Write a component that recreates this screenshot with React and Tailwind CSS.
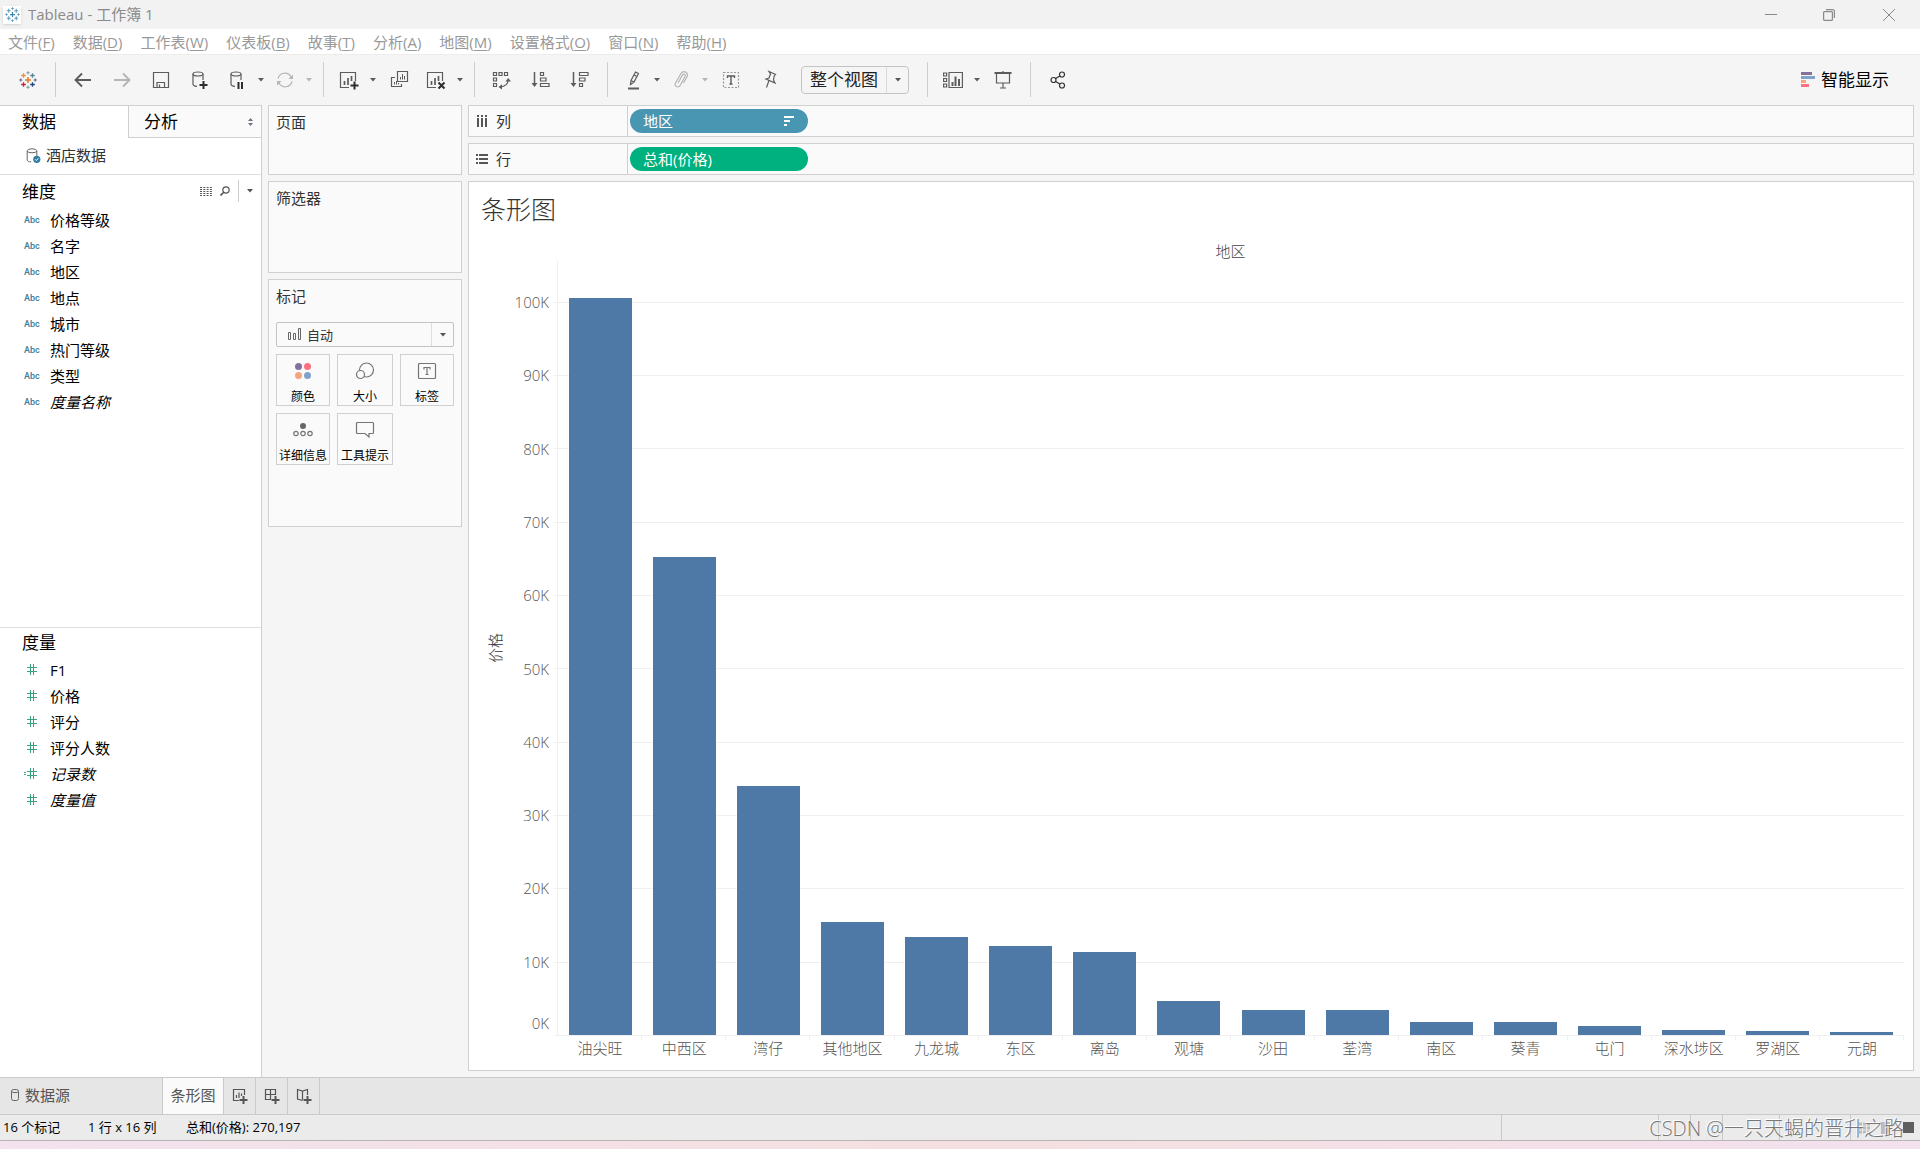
import React, { useState } from "react";
import clsx from "clsx";

const menus = [
  ["文件", "F"],
  ["数据", "D"],
  ["工作表", "W"],
  ["仪表板", "B"],
  ["故事", "T"],
  ["分析", "A"],
  ["地图", "M"],
  ["设置格式", "O"],
  ["窗口", "N"],
  ["帮助", "H"],
];

const dimensions = [
  { name: "价格等级" },
  { name: "名字" },
  { name: "地区" },
  { name: "地点" },
  { name: "城市" },
  { name: "热门等级" },
  { name: "类型" },
  { name: "度量名称", generated: true },
];

const measures = [
  { name: "F1" },
  { name: "价格" },
  { name: "评分" },
  { name: "评分人数" },
  { name: "记录数", generated: true, calculated: true },
  { name: "度量值", generated: true },
];

// price totals per district
const AXIS_MAX = 105600;
const districts = [
  { name: "油尖旺", value: 100600 },
  { name: "中西区", value: 65250 },
  { name: "湾仔", value: 34000 },
  { name: "其他地区", value: 15450 },
  { name: "九龙城", value: 13400 },
  { name: "东区", value: 12150 },
  { name: "离岛", value: 11350 },
  { name: "观塘", value: 4650 },
  { name: "沙田", value: 3420 },
  { name: "荃湾", value: 3410 },
  { name: "南区", value: 1800 },
  { name: "葵青", value: 1780 },
  { name: "屯门", value: 1240 },
  { name: "深水埗区", value: 700 },
  { name: "罗湖区", value: 560 },
  { name: "元朗", value: 420 },
];
const ticks = [100, 90, 80, 70, 60, 50, 40, 30, 20, 10];

const Icon = ({ size = 20, children, className }) => (
  <svg
    width={size}
    height={size}
    viewBox={`0 0 ${size} ${size}`}
    fill="none"
    stroke="currentColor"
    strokeWidth="1.2"
    className={className}
    aria-hidden="true"
  >
    {children}
  </svg>
);

const Caret = ({ className }) => (
  <svg
    width="6"
    height="4"
    viewBox="0 0 6 4"
    className={className}
    aria-hidden="true"
  >
    <path d="M0 0h6L3 3.5z" fill="currentColor" />
  </svg>
);

const plusPath = (x, y, r) => `M${x - r} ${y}h${r * 2}M${x} ${y - r}v${r * 2}`;

const TableauLogo = ({ size, colors }) => (
  <svg width={size} height={size} viewBox="0 0 18 18" fill="none" aria-hidden="true">
    <path d={plusPath(9, 9, 3)} stroke={colors[0]} strokeWidth="1.5" />
    <path d={plusPath(4.5, 4.5, 2.3)} stroke={colors[1]} strokeWidth="1.3" />
    <path d={plusPath(13.5, 4.5, 2.3)} stroke={colors[2]} strokeWidth="1.3" />
    <path d={plusPath(4.5, 13.5, 2.3)} stroke={colors[3]} strokeWidth="1.3" />
    <path d={plusPath(13.5, 13.5, 2.3)} stroke={colors[4]} strokeWidth="1.3" />
    <path d={plusPath(9, 1.8, 1.6)} stroke={colors[5]} />
    <path d={plusPath(9, 16.2, 1.6)} stroke={colors[5]} />
    <path d={plusPath(1.8, 9, 1.6)} stroke={colors[6]} />
    <path d={plusPath(16.2, 9, 1.6)} stroke={colors[6]} />
  </svg>
);

const ToolButton = ({ label, caret, disabled, children }) => (
  <div
    className={clsx("flex items-center", disabled ? "text-[#b5b5b5]" : "text-[#5c5c5c]")}
  >
    <button
      type="button"
      aria-label={label}
      disabled={disabled}
      className={clsx("flex h-9 items-center justify-center", caret ? "w-9" : "w-[39px]")}
    >
      {children}
    </button>
    {caret && (
      <button
        type="button"
        aria-label={`${label}选项`}
        disabled={disabled}
        className="flex h-9 w-3 items-center justify-center"
      >
        <Caret />
      </button>
    )}
  </div>
);

const Divider = () => <div className="mr-[7px] ml-2 h-[35px] w-px bg-[#cfcfcf]" />;

const TitleBar = () => (
  <header className="flex h-[29px] items-center bg-[#f2f2f2] pl-[3px] text-[#8a8a8a]">
    <div className="flex h-[18px] w-[18px] items-center justify-center bg-white shadow">
      <TableauLogo
        size={15}
        colors={["#3b86b0", "#5a9bbf", "#5a9bbf", "#5a9bbf", "#5a9bbf", "#5a9bbf", "#5a9bbf"]}
      />
    </div>
    <h1 className="ml-[7px] flex-1 pb-0.5 text-[15px] leading-5">Tableau - 工作簿 1</h1>
    <div className="flex">
      <button type="button" aria-label="最小化" className="flex w-[58px] justify-center">
        <Icon size={12}>
          <path d="M0 5.5h12" strokeWidth="1" />
        </Icon>
      </button>
      <button type="button" aria-label="还原" className="flex w-[58px] justify-center">
        <Icon size={12}>
          <rect x="0.6" y="2.6" width="8.8" height="8.8" rx="1" />
          <path d="M3 .6h6.4a2 2 0 0 1 2 2V9" />
        </Icon>
      </button>
      <button type="button" aria-label="关闭" className="flex w-[62px] justify-center">
        <Icon size={12}>
          <path d="M0 0l12 12M12 0L0 12" strokeWidth="1" />
        </Icon>
      </button>
    </div>
  </header>
);

const MenuBar = () => (
  <nav className="flex h-[25px] items-center gap-[18px] bg-white pl-2 text-[15px] leading-5 text-[#999]">
    {menus.map(([name, key]) => (
      <button type="button" key={key} className="whitespace-nowrap">
        {name}(<u className="underline-offset-2">{key}</u>)
      </button>
    ))}
  </nav>
);

const Toolbar = () => {
  const [fit, setFit] = useState("整个视图");

  return (
    <div className="flex h-[51px] items-center border-t border-[#ececec] pr-[31px] pb-px pl-2">
      <ToolButton label="起始页">
        <TableauLogo
          size={18}
          colors={["#e8762c", "#e8912d", "#5b879b", "#c72035", "#1f447e", "#7099a6", "#5b6591"]}
        />
      </ToolButton>
      <Divider />
      <ToolButton label="撤消">
        <Icon>
          <path d="M18 10H3M9 3.5L2.5 10 9 16.5" strokeWidth="1.9" />
        </Icon>
      </ToolButton>
      <ToolButton label="重做" disabled>
        <Icon>
          <path d="M2 10h15M11 3.5L17.5 10 11 16.5" strokeWidth="1.9" />
        </Icon>
      </ToolButton>
      <ToolButton label="保存">
        <Icon>
          <path d="M2.5 2.5h15v15h-15z" />
          <path d="M6 17.5v-5h7.5v5M8.5 17v-2.5" />
        </Icon>
      </ToolButton>
      <ToolButton label="新建数据源">
        <Icon>
          <ellipse cx="8" cy="4" rx="5" ry="2" />
          <path d="M3 4v10c0 1.4 1.5 2.2 4 2.3M13 4v6" />
          <path d="M9.5 15h8M13.5 11v8" stroke="#2d2d2d" strokeWidth="2" />
        </Icon>
      </ToolButton>
      <ToolButton label="暂停自动更新" caret>
        <Icon>
          <ellipse cx="9" cy="4" rx="5" ry="2" />
          <path d="M4 4v10c0 1.4 1.5 2.2 4 2.3M14 4v6" />
          <path d="M11.5 12v7M15 12v7" stroke="#2d2d2d" strokeWidth="2" />
        </Icon>
      </ToolButton>
      <ToolButton label="运行更新" caret disabled>
        <Icon>
          <path d="M3 8.5A7 7 0 0 1 16 7M17 11.5A7 7 0 0 1 4 13" />
          <path d="M18 4.5V9h-4.5zM2 15.5V11h4.5z" fill="currentColor" stroke="none" />
        </Icon>
      </ToolButton>
      <Divider />
      <ToolButton label="新建工作表" caret>
        <Icon>
          <path d="M10 17.5H1.5v-15h15V11" />
          <path d="M5.5 11v4M9 8v7M12.5 6v5" strokeWidth="1.7" />
          <path d="M11.5 15.5h8M15.5 11.5v8" stroke="#2d2d2d" strokeWidth="2" />
        </Icon>
      </ToolButton>
      <ToolButton label="复制工作表">
        <Icon>
          <path d="M8.5 1.5h10v10h-10zM6 7.5H2.5v9h10V14" />
          <path
            d="M11.5 7v2.5M13.5 4v5.5M15.5 6v3.5M5.5 12v2.5M7.5 11v3.5M9.5 13v1.5"
            strokeWidth="1"
          />
        </Icon>
      </ToolButton>
      <ToolButton label="清除工作表" caret>
        <Icon>
          <path d="M10 17.5H1.5v-15h15V11" />
          <path d="M5.5 11v4M9 8v7M12.5 6v5" strokeWidth="1.7" />
          <path d="M12.5 12.5l6 6M18.5 12.5l-6 6" stroke="#2d2d2d" strokeWidth="2" />
        </Icon>
      </ToolButton>
      <Divider />
      <ToolButton label="交换行和列">
        <Icon>
          <path d="M1.5 2.5h3v3h-3zM7 2.5h3v3H7zM12.5 2.5h3v3h-3zM1.5 8h3v3h-3zM1.5 13.5h3v3h-3z" />
          <path d="M16 10c0 4-3 6.5-8 7" />
          <path
            d="M13.5 11.5L16.2 8l2.8 3.5zM10 14.3L6.5 17l3.500 2.500z"
            fill="currentColor"
            stroke="none"
          />
        </Icon>
      </ToolButton>
      <ToolButton label="升序排序">
        <Icon>
          <path d="M3.5 2v13" strokeWidth="1.5" />
          <path d="M.5 13h6l-3 4z" fill="currentColor" stroke="none" />
          <path d="M9.500 2.500h3v3h-3zM9.500 8h5.500v3H9.500zM9.500 13.500h8.500v3H9.500z" />
        </Icon>
      </ToolButton>
      <ToolButton label="降序排序">
        <Icon>
          <path d="M3.5 2v13" strokeWidth="1.5" />
          <path d="M.5 13h6l-3 4z" fill="currentColor" stroke="none" />
          <path d="M9.500 2.500h8.500v3H9.500zM9.500 8h5.500v3H9.500zM9.500 13.500h3v3h-3z" />
        </Icon>
      </ToolButton>
      <Divider />
      <ToolButton label="突出显示" caret>
        <Icon>
          <path d="M7.500 14.500l.5-4L12.500 2l3 1.500-4.500 8.500zM8 10.500l3 1.500M11 5l3 1.500" />
          <path d="M5 18.500h11" strokeWidth="2" />
        </Icon>
      </ToolButton>
      <ToolButton label="组成员" caret disabled>
        <Icon>
          <path d="M7 13l4.500-8a1.500 1.500 0 0 1 2.600 1.500l-5 9A2.600 2.600 0 0 1 4.500 13l5.500-9.500a3.400 3.400 0 0 1 6 3.300L12.500 13" />
        </Icon>
      </ToolButton>
      <ToolButton label="显示标记标签">
        <Icon>
          <path d="M2.500 2.500h15v15h-15z" strokeDasharray="2 1.500" stroke="#999" />
          <path d="M6.500 8V6h7v2M10 6v8M8.500 14h3" strokeWidth="1.400" />
        </Icon>
      </ToolButton>
      <ToolButton label="固定轴">
        <Icon>
          <path d="M9 1.500l6.500 3-1.200 1.200-.8 4.300 1.500 3-9-4 3-1 1.500-4zM8.800 11L6.500 17.500" />
        </Icon>
      </ToolButton>
      <div className="relative mr-[10px] ml-3">
        <select
          aria-label="适合"
          value={fit}
          onChange={(e) => setFit(e.target.value)}
          className="h-7 w-[108px] appearance-none rounded-sm border border-[#c4c4c4] bg-[#f5f5f5] pl-2 text-[17px] leading-6 text-[#222]"
        >
          <option>标准</option>
          <option>适合宽度</option>
          <option>适合高度</option>
          <option>整个视图</option>
        </select>
        <span className="pointer-events-none absolute inset-y-px right-px flex w-[22px] items-center justify-center border-l border-[#d9d9d9] text-[#555]">
          <Caret />
        </span>
      </div>
      <Divider />
      <ToolButton label="显示/隐藏卡" caret>
        <Icon>
          <path d="M.6 3h3v3h-3zM.6 8.500h3v3h-3zM.6 14h3v3h-3zM6 2.500h13.400v15H6z" />
          <path d="M9.500 12v4M12.500 6.500V16M16 9v7" strokeWidth="2" />
        </Icon>
      </ToolButton>
      <ToolButton label="演示模式">
        <Icon>
          <path d="M1.500 3h17" strokeWidth="2" />
          <path d="M3.500 3.500v9.500h13V3.500M10 13v5M7 18h6M10 1v2" />
        </Icon>
      </ToolButton>
      <Divider />
      <ToolButton label="共享">
        <Icon className="text-[#333]">
          <circle cx="5.5" cy="10" r="2.500" />
          <circle cx="14" cy="4.500" r="2.500" />
          <circle cx="14" cy="15.500" r="2.500" />
          <path d="M7.600 8.600l4.300-2.700M7.600 11.400l4.300 2.700" />
        </Icon>
      </ToolButton>
      <button
        type="button"
        className="ml-auto flex items-center gap-[6px] text-[17px] leading-6 text-black"
      >
        <svg width="14" height="16" viewBox="0 0 14 16" aria-hidden="true">
          <path d="M0 0h11v3H0z" fill="#85709b" />
          <path d="M0 4h14v3H0z" fill="#7ea2cb" />
          <path d="M0 8h5v3H0z" fill="#f5a57c" />
          <path d="M0 12h8v3H0z" fill="#fb7180" />
        </svg>
        智能显示
      </button>
    </div>
  );
};

const FieldRow = ({ field, icon }) => (
  <li
    className={clsx(
      "flex h-[26px] items-center text-[15px] leading-5 text-black",
      field.generated && "italic"
    )}
  >
    <span className="flex w-[50px] items-center pl-6">{icon}</span>
    {field.name}
  </li>
);

const HashIcon = ({ calculated }) => (
  <svg width="17" height="12" viewBox="0 0 17 12" fill="none" stroke="#3aa17e" aria-hidden="true">
    <path d="M3 3.5h10M3 7.5h10M6.5 0v11M9.5 0v11" />
    {calculated && <path d="M0 4.5h2M0 6.5h2" />}
  </svg>
);

const DataPane = () => (
  <aside className="flex w-[262px] shrink-0 flex-col border-t border-r border-[#d0d0d0] bg-white">
    <div className="flex h-8 text-[17px] leading-6 text-black">
      <button type="button" className="w-32 pl-[22px] text-left">
        数据
      </button>
      <button
        type="button"
        className="flex flex-1 items-center border-b border-l border-[#d0d0d0] bg-[#fafafa] pr-2 pl-[15px]"
      >
        分析
        <svg width="5" height="8" viewBox="0 0 5 8" className="ml-auto" aria-hidden="true">
          <path d="M0 3l2.500-3L5 3zM0 5l2.500 3L5 5z" fill="#6b7480" />
        </svg>
      </button>
    </div>
    <div className="flex h-[37px] items-center gap-[5px] border-b border-[#dedede] pb-0.5 pl-[26px] text-[15px] leading-5 text-[#333]">
      <Icon size={15} className="text-[#666]">
        <ellipse cx="6" cy="2.8" rx="4.8" ry="2" strokeWidth="1" />
        <path d="M1.200 3v9c0 1.200 1.500 1.800 4 1.900M10.800 3v5" strokeWidth="1" />
        <circle cx="10.8" cy="11.3" r="3.6" fill="#2f7ea3" stroke="none" />
        <path d="M9.200 11.300l1.200 1.200 2-2.200" stroke="#fff" strokeWidth="1" />
      </Icon>
      酒店数据
    </div>
    <section className="flex-1 border-b border-[#dedede]">
      <div className="flex h-8 items-center pr-2 text-[17px] leading-6 text-black">
        <h2 className="flex-1 pt-0.5 pl-[22px]">维度</h2>
        <button type="button" aria-label="列表视图" className="mr-2 text-[#555]">
          <svg
            width="12"
            height="9"
            viewBox="0 0 12 9"
            fill="none"
            stroke="currentColor"
            aria-hidden="true"
          >
            <path
              d="M0 .5h12M0 2.500h12M0 4.500h12M0 6.500h12M0 8.500h12"
              strokeDasharray="2 1.300"
            />
          </svg>
        </button>
        <button type="button" aria-label="查找字段" className="mr-2 text-[#555]">
          <Icon size={10}>
            <circle cx="6" cy="4" r="3.200" />
            <path d="M3.800 6.200L.5 9.500" strokeWidth="1.600" />
          </Icon>
        </button>
        <button
          type="button"
          aria-label="维度菜单"
          className="flex h-[22px] items-center border-l border-[#ccc] pl-2 text-[#555]"
        >
          <Caret />
        </button>
      </div>
      <ul>
        {dimensions.map((f) => (
          <FieldRow
            key={f.name}
            field={f}
            icon={
              <span className="font-[Roboto] text-[9px] leading-3 font-medium text-[#3a7d9b] not-italic">
                Abc
              </span>
            }
          />
        ))}
      </ul>
    </section>
    <section className="h-[449px]">
      <h2 className="h-[29px] pt-[3px] pl-[22px] text-[17px] leading-6 text-black">度量</h2>
      <ul>
        {measures.map((f) => (
          <FieldRow key={f.name} field={f} icon={<HashIcon calculated={f.calculated} />} />
        ))}
      </ul>
    </section>
  </aside>
);

const markButtons = [
  {
    label: "颜色",
    icon: (
      <g stroke="none">
        <circle cx="5.5" cy="5.5" r="3.5" fill="#85709b" />
        <circle cx="14.5" cy="5.5" r="3.5" fill="#fb7180" />
        <circle cx="5.5" cy="14.5" r="3.5" fill="#f5a57c" />
        <circle cx="14.5" cy="14.5" r="3.5" fill="#7ea2cb" />
      </g>
    ),
  },
  {
    label: "大小",
    icon: (
      <>
        <circle cx="11.5" cy="9" r="7" />
        <circle cx="5.5" cy="13.5" r="4" fill="#fafafa" />
      </>
    ),
  },
  {
    label: "标签",
    icon: (
      <>
        <rect x="1.5" y="2.5" width="17" height="15" rx="1" />
        <path d="M7 8.500v-2h6v2M10 6.500v7M8.500 13.500h3" />
      </>
    ),
  },
  {
    label: "详细信息",
    icon: (
      <>
        <circle cx="10" cy="6" r="3" fill="#666" stroke="none" />
        <circle cx="3" cy="13.5" r="2.2" />
        <circle cx="10" cy="13.5" r="2.2" />
        <circle cx="17" cy="13.5" r="2.2" />
      </>
    ),
  },
  {
    label: "工具提示",
    icon: (
      <path d="M2.500 2.500h15a1 1 0 0 1 1 1v9a1 1 0 0 1-1 1h-3.500v3.500l-4-3.500H2.500a1 1 0 0 1-1-1v-9a1 1 0 0 1 1-1z" />
    ),
  },
];

const Card = ({ title, className, children }) => (
  <section className={clsx("border border-[#d0d0d0] bg-[#fafafa] px-[7px] pt-[6px]", className)}>
    <h2 className="text-[15px] leading-5 text-[#333]">{title}</h2>
    {children}
  </section>
);

const Cards = () => {
  const [mark, setMark] = useState("自动");

  return (
    <div className="flex w-[194px] shrink-0 flex-col gap-[6px]">
      <Card title="页面" className="h-[70px]" />
      <Card title="筛选器" className="h-[92px]" />
      <Card title="标记" className="h-[248px]">
        <div className="relative mt-4">
          <select
            aria-label="标记类型"
            value={mark}
            onChange={(e) => setMark(e.target.value)}
            className="block h-[25px] w-full appearance-none rounded-xs border border-[#c4c4c4] bg-[#fafafa] pl-[30px] text-[13px] leading-5 text-[#333]"
          >
            <option>自动</option>
            <option>条形图</option>
            <option>线</option>
            <option>圆</option>
          </select>
          <svg
            width="14"
            height="12"
            viewBox="0 0 14 12"
            fill="none"
            stroke="#666"
            className="pointer-events-none absolute top-[6px] left-3"
            aria-hidden="true"
          >
            <path d="M.5 4.500h2v7h-2zM5.500 5.500h2v6h-2zM10.500.5h2v11h-2z" />
          </svg>
          <span className="pointer-events-none absolute inset-y-px right-px flex w-[22px] items-center justify-center border-l border-[#dedede] text-[#555]">
            <Caret />
          </span>
        </div>
        <div className="mt-[7px] grid grid-cols-[54px_56px_54px] gap-[7px]">
          {markButtons.map((b) => (
            <button
              type="button"
              key={b.label}
              className="flex h-[52px] flex-col items-center border border-[#d0d0d0] pt-[6px] text-xs text-black"
            >
              <Icon size={20} className="shrink-0 text-[#757575]">
                {b.icon}
              </Icon>
              <span className="mt-2 leading-4 whitespace-nowrap">{b.label}</span>
            </button>
          ))}
        </div>
      </Card>
    </div>
  );
};

const Shelf = ({ title, icon, children }) => (
  <div className="flex h-8 border border-[#d0d0d0] bg-[#fafafa]">
    <div className="flex w-[159px] items-center gap-2 border-r border-[#d0d0d0] pl-[7px] text-[15px] leading-5 text-[#333]">
      {icon}
      {title}
    </div>
    <div className="flex items-center pl-[2px]">{children}</div>
  </div>
);

const Pill = ({ className, children }) => (
  <button
    type="button"
    className={clsx(
      "flex h-6 w-[178px] items-center justify-between rounded-full pr-[14px] pl-[13px] text-[15px] leading-5 text-white",
      className
    )}
  >
    {children}
  </button>
);

const BarChart = () => (
  <div className="flex flex-1 flex-col border border-[#d0d0d0] bg-white pr-[9px] pl-3">
    <h2 className="pt-2 text-[25px] leading-[38px] font-light text-[#333]">条形图</h2>
    <div className="mt-[13px] pl-[76px] text-center text-[15px] leading-5 font-light text-[#444]">
      地区
    </div>
    <div className="flex flex-1">
      <div className="flex w-7 items-center justify-end pr-1 text-[15px] leading-5 font-light text-[#333]">
        <span className="rotate-180 [text-orientation:sideways] [writing-mode:vertical-rl]">
          价格
        </span>
      </div>
      <div className="flex w-10 flex-col text-right text-[15px] leading-5 font-light text-[#555]">
        <div className="grow-[56]" />
        {ticks.map((t) => (
          <div key={t} className="flex grow-[100] basis-0 flex-col justify-between">
            <span className="-translate-y-1/2">{t}K</span>
            {t === 10 && <span className="pb-0.5">0K</span>}
          </div>
        ))}
      </div>
      <div className="ml-[5px] grid flex-1">
        <div className="col-start-1 row-start-1 flex flex-col">
          <div className="grow-[56]" />
          {ticks.map((t) => (
            <div key={t} className="grow-[100] basis-0 border-t border-[#f0f0f0]" />
          ))}
        </div>
        <div className="col-start-1 row-start-1 ml-[3px] flex border-l border-[#f0f0f0]">
          {districts.map((d) => (
            <div key={d.name} className="flex flex-1 items-end justify-center">
              <div
                title={`${d.name}: ${d.value}`}
                className="w-3/4 bg-[#4e79a7]"
                style={{ height: `${(d.value / AXIS_MAX) * 100}%` }}
              />
            </div>
          ))}
        </div>
      </div>
    </div>
    <div className="mb-[14px] ml-[73px] border-t border-[#f0f0f0] pl-1">
      <div className="flex">
        {districts.map((d) => (
          <div key={d.name} className="flex flex-1 flex-col">
            <div className="h-1 border-r border-[#f0f0f0]" />
            <span className="text-center text-[15px] leading-4 font-light whitespace-nowrap text-[#555]">
              {d.name}
            </span>
          </div>
        ))}
      </div>
    </div>
  </div>
);

const SheetTabs = () => (
  <div className="flex h-[38px] border-y border-[#cacaca] bg-[#e6e6e6] text-[15px] leading-5 text-[#555]">
    <button
      type="button"
      className="flex w-[163px] items-center gap-[6px] border-r border-[#cacaca] pb-0.5 pl-[11px]"
    >
      <svg
        width="8"
        height="12"
        viewBox="0 0 8 12"
        fill="none"
        stroke="#666"
        aria-hidden="true"
      >
        <rect x=".5" y=".5" width="7" height="11" rx="2" />
        <path d="M.5 2.500c1 1.500 6 1.500 7 0" />
      </svg>
      数据源
    </button>
    <button type="button" className="w-[61px] border-r border-[#cacaca] bg-[#fafafa] pb-0.5">
      条形图
    </button>
    <button
      type="button"
      aria-label="新建工作表"
      className="flex w-8 items-center justify-center border-r border-[#cacaca]"
    >
      <Icon size={16}>
        <path d="M7 12.500H1.500V1.500h11V7M4.500 7v3M7 4.500V10M9.500 5.500V8" />
        <path d="M7.500 12h8M11.500 8v8" strokeWidth="2" />
      </Icon>
    </button>
    <button
      type="button"
      aria-label="新建仪表板"
      className="flex w-8 items-center justify-center border-r border-[#cacaca]"
    >
      <Icon size={16}>
        <path d="M7 11.500H1.500V1.500h10V7M6.500 1.500v10M1.500 6.500h10" />
        <path d="M7.500 12h8M11.500 8v8" strokeWidth="2" />
      </Icon>
    </button>
    <button
      type="button"
      aria-label="新建故事"
      className="flex w-8 items-center justify-center border-r border-[#cacaca]"
    >
      <Icon size={16}>
        <path d="M6.500 12.500L1.500 11V1.500l5 1.500 5-1.500V7M6.500 3v9" />
        <path d="M7.500 12h8M11.500 8v8" strokeWidth="2" />
      </Icon>
    </button>
  </div>
);

const StatusBar = () => (
  <footer className="relative flex h-[26px] border-b border-[#b9b3b4] bg-[#ebebeb] text-[13px] leading-6 text-black">
    <span className="w-[85px] pl-[3px]">16 个标记</span>
    <span className="w-[98px] pl-[3px]">1 行 x 16 列</span>
    <span className="flex-1 pl-[3px]">总和(价格): 270,197</span>
    <div className="w-[157px] border-l border-[#c8c8c8]" />
    <div className="w-8 border-l border-[#c8c8c8]" />
    <div className="w-8 border-l border-[#c8c8c8]" />
    <div className="w-[57px] border-l border-[#c8c8c8]" />
    <div className="w-[71px] border-l border-[#c8c8c8]" />
    <div className="flex w-[70px] items-center justify-end border-l border-[#c8c8c8] pr-[6px]">
      <svg width="57" height="12" viewBox="0 0 57 12" fill="none" aria-hidden="true">
        <path d="M2 2h12M2 6h12M2 10h12" stroke="#bbb" strokeWidth="3" strokeDasharray="3 1" />
        <path d="M24 0h9v12h-9z" fill="#bbb" />
        <path d="M46 0h11v11H46z" fill="#5f5f5f" />
      </svg>
    </div>
    <p className="absolute top-[2px] right-4 text-xl leading-6 font-light whitespace-nowrap text-[#777] [text-shadow:-1px_-1px_0_#fff]">
      CSDN @一只天蝎的晋升之路
    </p>
  </footer>
);

const App = () => (
  <div className="flex h-screen flex-col overflow-hidden bg-[#f5f5f5] font-['Open_Sans','Noto_Sans_CJK_SC',sans-serif]">
    <TitleBar />
    <MenuBar />
    <Toolbar />
    <main className="flex min-h-0 flex-1">
      <DataPane />
      <div className="flex flex-1 gap-[6px] pr-[6px] pb-[6px] pl-[6px]">
        <Cards />
        <div className="flex flex-1 flex-col gap-[6px]">
          <Shelf
            title="列"
            icon={
              <svg width="12" height="12" viewBox="0 0 12 12" fill="none" stroke="#555" aria-hidden="true">
                <path d="M2 0v2M6 0v2M10 0v2M2 3v9M6 3v9M10 3v9" strokeWidth="2" />
              </svg>
            }
          >
            <Pill className="bg-[#4996b2]">
              地区
              <svg width="10" height="10" viewBox="0 0 10 10" aria-hidden="true">
                <path d="M0 0h10v2H0zM0 4h6v2H0zM0 8h3v2H0z" fill="#fff" />
              </svg>
            </Pill>
          </Shelf>
          <Shelf
            title="行"
            icon={
              <svg width="12" height="10" viewBox="0 0 12 10" fill="none" stroke="#555" aria-hidden="true">
                <path d="M0 1h2M0 5h2M0 9h2M3 1h9M3 5h9M3 9h9" strokeWidth="2" />
              </svg>
            }
          >
            <Pill className="bg-[#00b180]">总和(价格)</Pill>
          </Shelf>
          <BarChart />
        </div>
      </div>
    </main>
    <SheetTabs />
    <StatusBar />
    <div className="h-2 bg-linear-to-r from-[#f3e3ee] via-[#f5dfe0] to-[#f3e1ee]" />
  </div>
);

export default App;
